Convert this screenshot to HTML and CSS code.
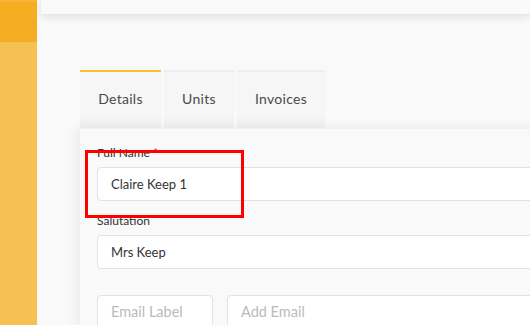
FILE: index.html
```html
<!DOCTYPE html>
<html lang="en">
<head>
    <meta charset="UTF-8">
    <meta name="viewport" content="width=device-width, initial-scale=1.0">
    <title>Contact</title>
    <link rel="stylesheet" href="styles.css">
</head>
<body>
    <div class="layout">
        <!-- sidebar -->
        <div class="sidebar">
            <div class="sidebar-top"></div>
            <div class="sidebar-active"></div>
        </div>

        <div class="main">
            <div class="topbar"></div>

            <div class="content">
                <div class="tabs">
                    <div class="tab active tab-details">Details</div>
                    <div class="tab tab-units">Units</div>
                    <div class="tab tab-invoices">Invoices</div>
                </div>

                <div class="card">
                    <div class="field">
                        <label class="label">Full Name <span class="req">*</span></label>
                        <input class="input" type="text" value="Claire Keep 1">
                    </div>
                    <div class="field">
                        <label class="label">Salutation</label>
                        <input class="input" type="text" value="Mrs Keep">
                    </div>
                    <div class="row">
                        <input class="input email-label" type="text" placeholder="Email Label">
                        <input class="input email-add" type="text" placeholder="Add Email">
                    </div>

                    <!-- highlight -->
                    <div class="highlight"></div>
                </div>
            </div>
        </div>
    </div>
</body>
</html>
```

FILE: styles.css
```css
html, body {
    margin: 0;
    padding: 0;
    width: 530px;
    height: 325px;
    overflow: hidden;
    background-color: #f9f9f9;
    font-family: Lato, "Open Sans", Arial, sans-serif;
    color: #333;
}

.layout {
    display: flex;
    width: 530px;
    height: 325px;
    overflow: hidden;
}

.sidebar {
    width: 37px;
    flex: 0 0 37px;
    background-color: #f7c052;
}

.sidebar-top {
    height: 2px;
    background-color: #f6b63c;
}

.sidebar-active {
    height: 40px;
    background-color: #f5ae22;
}

.main {
    flex: 1;
    min-width: 0;
    overflow: hidden;
}

.topbar {
    margin-left: 4px;
    height: 14px;
    background-color: #fafafa;
    box-shadow: 0 2px 10px rgba(0, 0, 0, 0.12);
}

.content {
    padding: 56px 0 0 43px;
}

.tabs {
    display: flex;
    gap: 3px;
    height: 58px;
}

.tab {
    box-sizing: border-box;
    border-top: 2px solid #eeeeee;
    background: linear-gradient(#f6f6f6 75%, #efefef);
    font-size: 14px;
    letter-spacing: 0.3px;
    color: #4a4a4a;
    display: flex;
    align-items: center;
    justify-content: center;
    padding-bottom: 3px;
}

.tab.active {
    border-top-color: #fbc02d;
}

.tab-details { width: 81px; }
.tab-units { width: 70px; }
.tab-invoices { width: 88px; }

.card {
    position: relative;
    width: 600px;
    height: 200px;
    background-color: #f9f9f9;
    padding: 16px 0 0 17px;
    box-sizing: border-box;
    box-shadow: -4px 0 12px rgba(0, 0, 0, 0.06);
    border-top: 1px solid #f1f1f1;
}

.field {
    display: flex;
    flex-direction: column;
    margin-bottom: 12px;
}

.label {
    font-size: 12px;
    color: #333;
    line-height: 16px;
    margin-bottom: 6px;
}

.req {
    color: #e53935;
}

.input {
    box-sizing: border-box;
    height: 34px;
    border: 1px solid #e2e2e2;
    border-radius: 4px;
    background-color: #fff;
    padding: 0 13px;
    font-family: Lato, "Open Sans", Arial, sans-serif;
    font-size: 13px;
    color: #333;
    outline: none;
}

.input::placeholder {
    color: #bbb;
    font-size: 14.5px;
}

.row {
    display: flex;
    gap: 14px;
    margin-top: 26px;
}

.email-label {
    width: 116px;
}

.email-add {
    flex: 1;
}

.highlight {
    position: absolute;
    left: 5px;
    top: 21px;
    width: 153px;
    height: 62px;
    border: 3px solid #ff0000;
}
```
